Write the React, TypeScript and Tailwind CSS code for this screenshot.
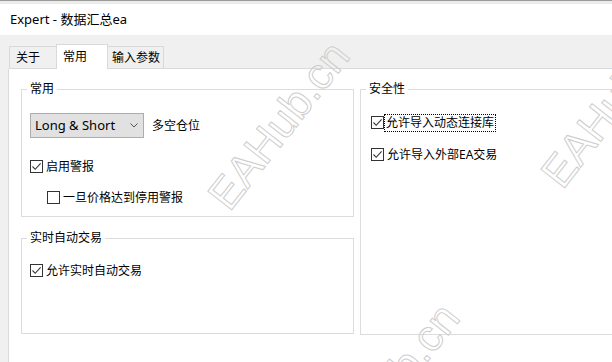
import React from "react";

const Check = ({ checked, label, focus }: { checked?: boolean; label: string; focus?: boolean }) => (
  <div className="flex items-center h-[15px]">
    <span className="w-[13px] h-[13px] shrink-0 border border-[#333333] bg-white flex items-center justify-center">
      {checked && (
        <svg width="11" height="11" viewBox="0 0 11 11">
          <path d="M1.5 5.5 L4.2 8.3 L9.6 2.4" stroke="#333333" strokeWidth="1.1" fill="none" />
        </svg>
      )}
    </span>
    {focus ? (
      <span className="h-[18px] flex items-center border border-dotted border-black pl-[1px] pr-[1px] whitespace-nowrap">{label}</span>
    ) : (
      <span className="ml-[3px] whitespace-nowrap">{label}</span>
    )}
  </div>
);

const Watermark = ({ x, y }: { x: number; y: number }) => (
  <span
    className="absolute leading-none text-[44px] font-['Liberation_Sans',sans-serif] text-transparent [-webkit-text-stroke:1px_#cdcdcd] origin-[0_100%] -rotate-[52deg] whitespace-nowrap pointer-events-none"
    style={{ left: x, top: y - 44 }}
  >
    EAHub.cn
  </span>
);

export default function App() {
  return (
    <div className="w-[612px] h-[362px] bg-white relative overflow-hidden text-[12px] text-black font-['Noto_Sans','Noto_Sans_CJK_SC',sans-serif]">
      <div className="h-px bg-[#9a9a9a]" />
      <div className="h-[3px] bg-[#ececec]" />
      <div className="h-[31px] flex items-center pl-[10px] text-[13px]">Expert - 数据汇总ea</div>

      {/* tab strip */}
      <div className="h-[34px] bg-[#f0f0f0] flex">
        <div className="w-[9px] shrink-0" />
        <div className="flex-1 flex items-end border-b border-[#d9d9d9]">
          <div className="h-[22px] w-[47px] border-l border-t border-[#d9d9d9] flex items-center pl-[6px] pt-[1px]">关于</div>
          <div className="h-[25px] w-[52px] -mb-px bg-white border-l border-t border-r border-[#d9d9d9] flex items-start pl-[6px] pt-[3px]">常用</div>
          <div className="h-[22px] w-[56px] border-t border-r border-[#d9d9d9] flex items-center pl-[4px] pt-[1px]">输入参数</div>
        </div>
      </div>

      {/* content */}
      <div className="h-[293px] flex">
        <div className="w-[9px] shrink-0 bg-[#f0f0f0] border-r border-[#d9d9d9]" />
        <div className="flex-1 flex pl-[12px] pt-[12px] gap-[6px]">
          <div className="w-[333px] shrink-0 flex flex-col gap-[13px]">
            <fieldset className="h-[136px] border border-[#dcdcdc]">
              <legend className="ml-[5px] px-[3px] leading-4">常用</legend>
              <div className="pl-[8px] flex flex-col">
                <div className="mt-4 flex items-center">
                  <div className="w-[114px] h-[25px] bg-[#e1e1e1] border border-[#adadad] flex items-center justify-between pl-[4px] pr-[5px] text-[13px]">
                    <span>Long &amp; Short</span>
                    <svg width="8" height="5" viewBox="0 0 8 5">
                      <path d="M0.5 0.5 L4 4 L7.5 0.5" stroke="#555555" strokeWidth="1" fill="none" />
                    </svg>
                  </div>
                  <span className="ml-[8px]">多空仓位</span>
                </div>
                <div className="mt-[21px]">
                  <Check checked label="启用警报" />
                </div>
                <div className="mt-[16px] pl-[17px]">
                  <Check label="一旦价格达到停用警报" />
                </div>
              </div>
            </fieldset>
            <fieldset className="h-[104px] border border-[#dcdcdc]">
              <legend className="ml-[5px] px-[3px] leading-4">实时自动交易</legend>
              <div className="pl-[8px] mt-[17px]">
                <Check checked label="允许实时自动交易" />
              </div>
            </fieldset>
          </div>
          <fieldset className="w-[300px] h-[254px] shrink-0 border border-[#dcdcdc]">
            <legend className="ml-[5px] px-[3px] leading-4">安全性</legend>
            <div className="pl-[10px] flex flex-col">
              <div className="mt-[18px]">
                <Check checked focus label="允许导入动态连接库" />
              </div>
              <div className="mt-[17px]">
                <Check checked label="允许导入外部EA交易" />
              </div>
            </div>
          </fieldset>
        </div>
      </div>

      <Watermark x={235} y={217} />
      <Watermark x={345} y={479} />
      <Watermark x={568} y={195} />
    </div>
  );
}
